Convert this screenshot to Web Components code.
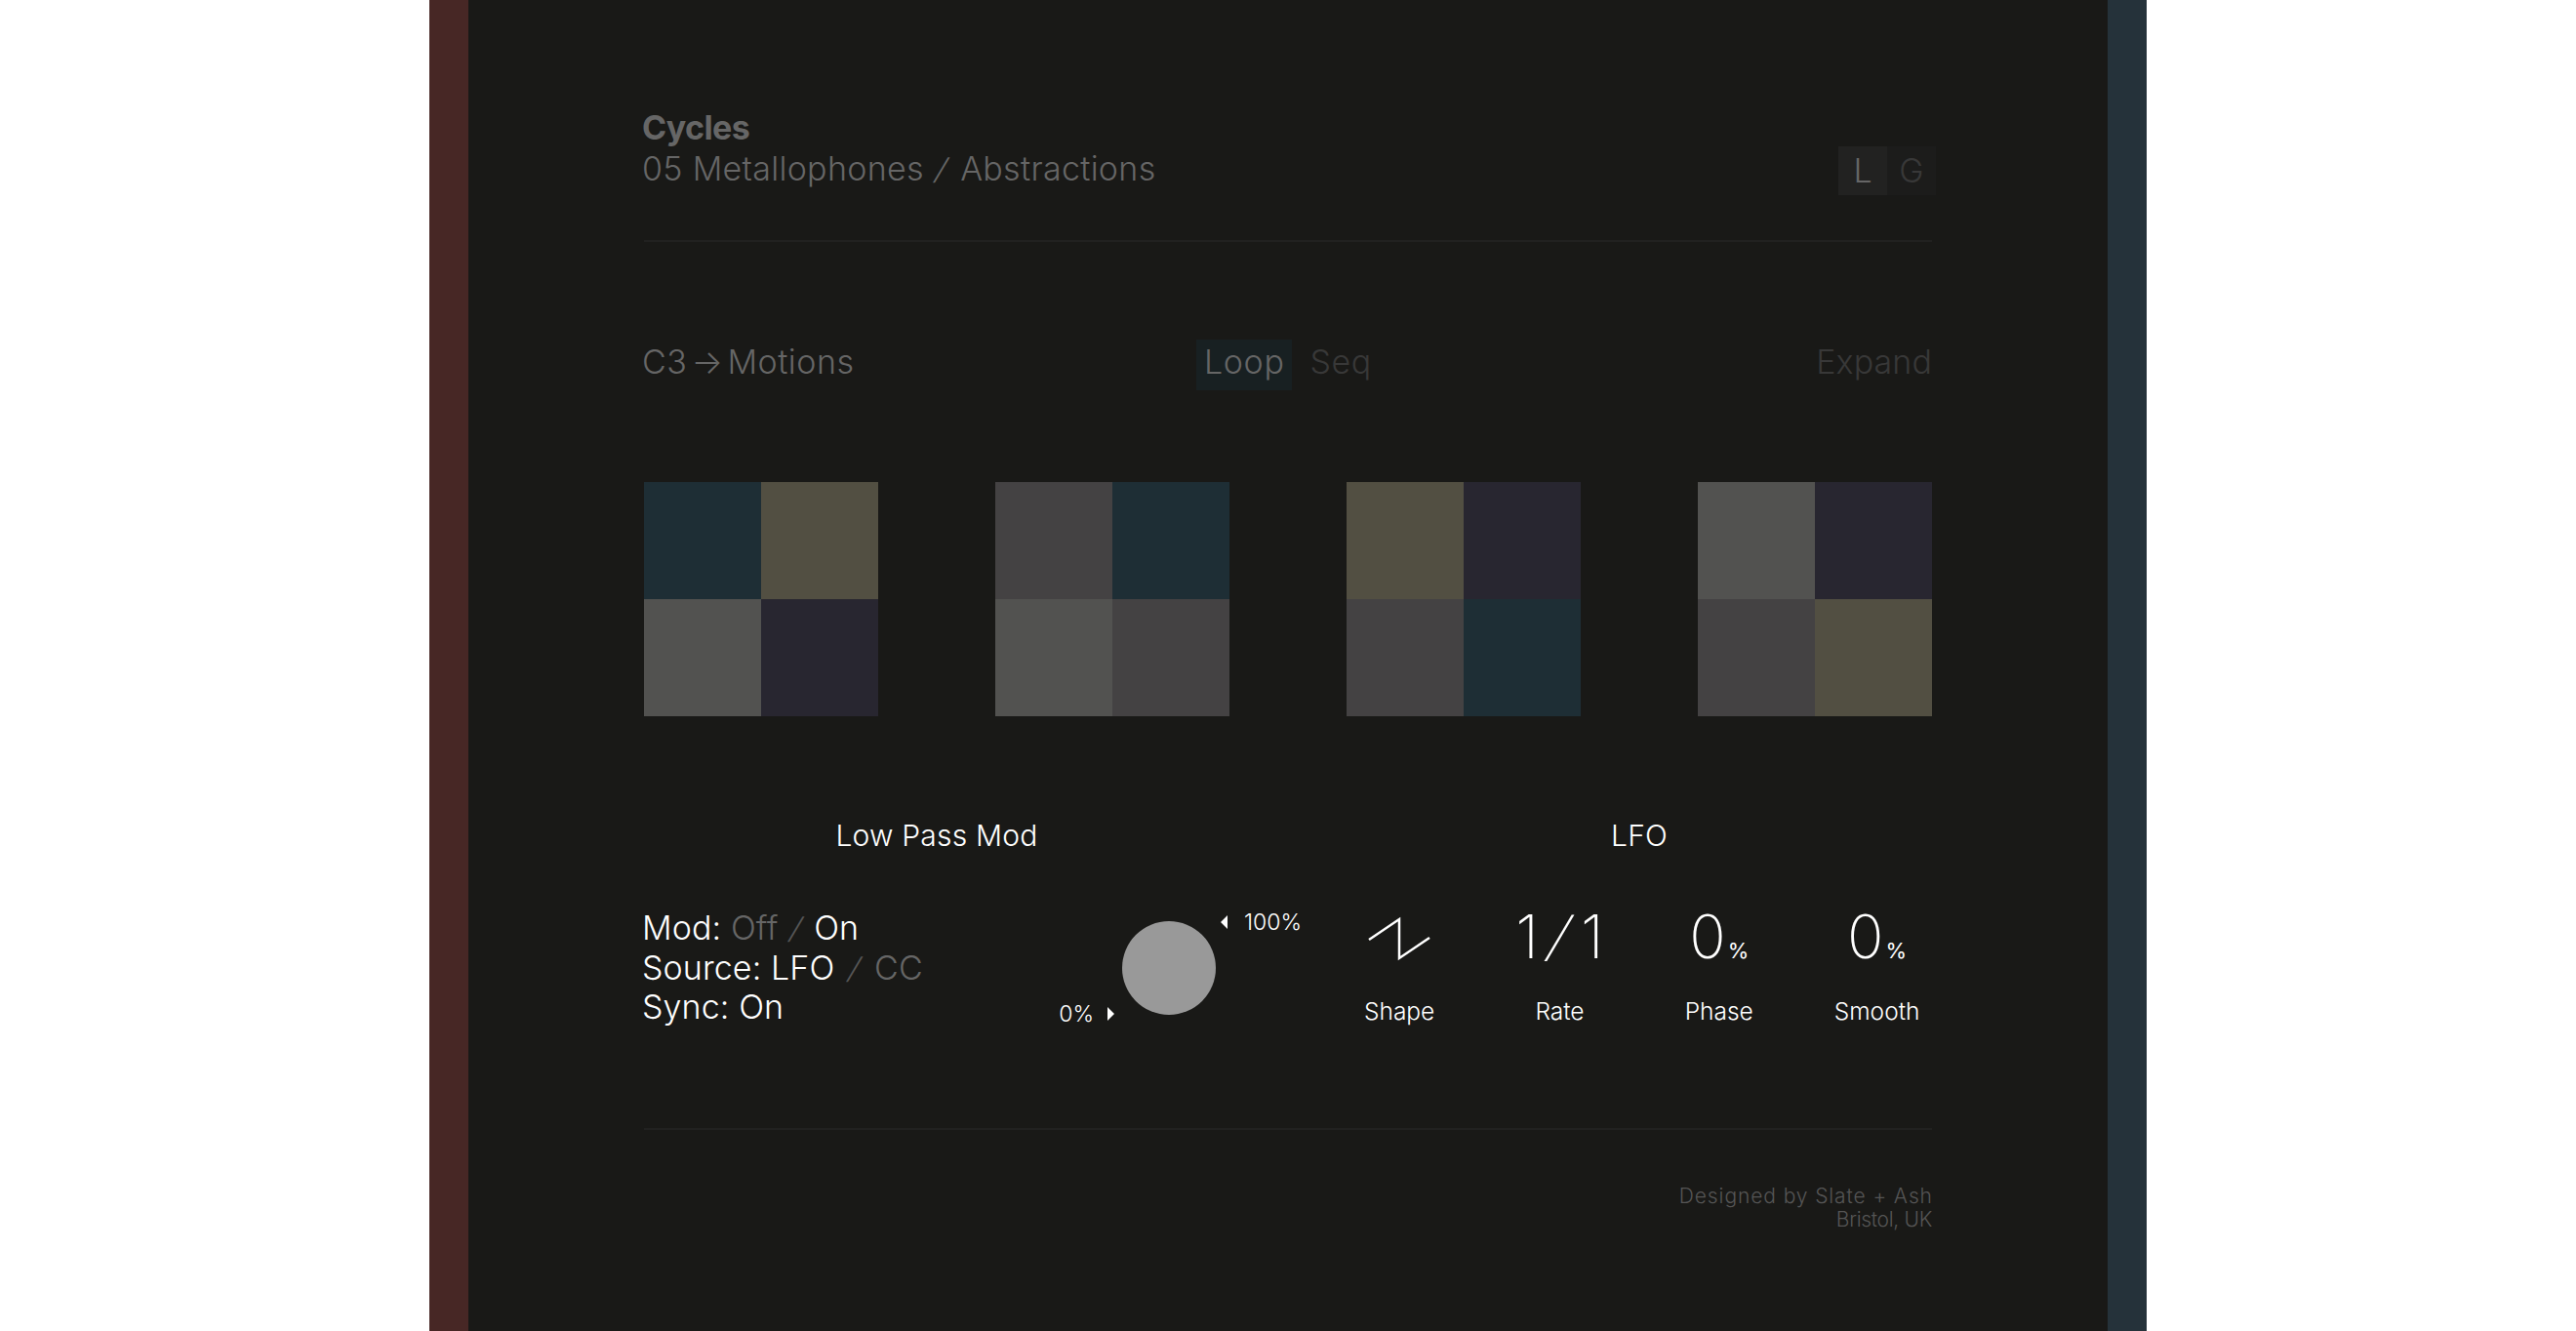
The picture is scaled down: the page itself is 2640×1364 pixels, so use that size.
<!DOCTYPE html>
<html lang="en">
<head>
<meta charset="utf-8">
<title>Cycles</title>
<style>
    html, body { margin: 0; padding: 0; background: #fff; }
    body { font-family: Inter, "Liberation Sans", sans-serif; font-weight: 300; overflow: hidden; }
</style>
</head>
<body>
<synth-page>
    <synth-header title="Cycles"></synth-header>
    <motion-bar></motion-bar>
    <swatch-row></swatch-row>
    <mod-panel></mod-panel>
    <site-footer></site-footer>
</synth-page>

<script>
    class SynthPage extends HTMLElement {
        constructor() {
            super();
            this.attachShadow({ mode: 'open' });
            this.shadowRoot.innerHTML = `
                <style>
                    :host { display: grid; grid-template-columns: 40px 1fr 40px; width: 1760px; height: 1364px; margin: 0 auto; overflow: hidden; }
                    .bar-left { background: #472725; }
                    .bar-right { background: #25323a; }
                    main { background: #191917; padding: 0 180px; min-width: 0; }
                </style>
                <div class="bar-left"></div>
                <main><slot></slot></main>
                <div class="bar-right"></div>
            `;
        }
    }

    // the reference slash is wider and leans more than the Inter one
    class SlashMark extends HTMLElement {
        constructor() {
            super();
            this.attachShadow({ mode: 'open' });
            this.shadowRoot.innerHTML = `
                <style>
                    :host { display: inline-block; transform: skewX(-16deg) scaleY(.88); margin: 0 var(--slash-gap, .08em); }
                </style>
                <slot></slot>
            `;
        }
    }

    class SynthHeader extends HTMLElement {
        constructor() {
            super();
            this.attachShadow({ mode: 'open' });
            this.shadowRoot.innerHTML = `
                <style>
                    :host { display: flex; justify-content: space-between; align-items: flex-end; height: 248px; box-sizing: border-box; padding-bottom: 46px; border-bottom: 2px solid #212120; font-size: 34px; line-height: 42px; font-weight: 350; color: #666; }
                    .text { margin: 0 0 6px -2px; letter-spacing: .3px; }
                    h1 { margin: 0; font: inherit; font-weight: 700; letter-spacing: -.6px; }
                    p { margin: 0; }
                    .toggle { display: flex; height: 50px; margin-right: -4px; }
                    .toggle span { width: 50px; display: flex; align-items: center; justify-content: center; background: #1c1c1b; color: #383838; }
                    .toggle span.on { background: #222221; color: #666; }
                </style>
                <div class="text">
                    <h1>${this.getAttribute('title')}</h1>
                    <p>05 Metallophones <slash-mark>/</slash-mark> Abstractions</p>
                </div>
                <div class="toggle"><span class="on">L</span><span>G</span></div>
            `;
        }
    }

    class MotionBar extends HTMLElement {
        constructor() {
            super();
            this.attachShadow({ mode: 'open' });
            this.shadowRoot.innerHTML = `
                <style>
                    :host { display: grid; grid-template-columns: 1fr auto 1fr; align-items: start; margin-top: 100px; font-size: 34px; line-height: 46px; font-weight: 350; color: #666; letter-spacing: .5px; }
                    .route { margin-left: -2px; word-spacing: -6px; }
                    .modes { display: flex; gap: 18px; margin-right: 8px; color: #383838; letter-spacing: .6px; }
                    .modes .on { background: #182022; color: #666; padding: 0 8px 6px; }
                    .expand { text-align: right; color: #383838; letter-spacing: .1px; }
                </style>
                <div class="route">C3 → Motions</div>
                <div class="modes"><span class="on">Loop</span><span>Seq</span></div>
                <div class="expand">Expand</div>
            `;
        }
    }

    const C = { teal: '#1e2e35', olive: '#524f42', grey: '#525250', plum: '#282630', mid: '#444243' };

    class MotionSwatch extends HTMLElement {
        constructor() {
            super();
            this.attachShadow({ mode: 'open' });
            const cells = this.getAttribute('cells').split(' ');
            this.shadowRoot.innerHTML = `
                <style>
                    :host { display: grid; grid-template-columns: 120px 120px; grid-auto-rows: 120px; }
                </style>
                ${cells.map(c => `<div style="background:${C[c]}"></div>`).join('')}
            `;
        }
    }

    class SwatchRow extends HTMLElement {
        constructor() {
            super();
            this.attachShadow({ mode: 'open' });
            this.shadowRoot.innerHTML = `
                <style>
                    :host { display: flex; justify-content: space-between; margin-top: 94px; }
                </style>
                <motion-swatch cells="teal olive grey plum"></motion-swatch>
                <motion-swatch cells="mid teal grey mid"></motion-swatch>
                <motion-swatch cells="olive plum mid teal"></motion-swatch>
                <motion-swatch cells="grey plum mid olive"></motion-swatch>
            `;
        }
    }

    class KnobDial extends HTMLElement {
        constructor() {
            super();
            this.attachShadow({ mode: 'open' });
            this.shadowRoot.innerHTML = `
                <style>
                    :host { display: block; position: relative; width: 96px; height: 96px; border-radius: 50%; background: #999; font-size: 23px; line-height: 30px; font-weight: 350; color: #fff; }
                    .tag { position: absolute; display: flex; align-items: center; white-space: nowrap; }
                    .max { left: 101px; top: -14px; gap: 17px; }
                    .min { right: 104px; top: 80px; gap: 14px; }
                    i { display: block; width: 0; height: 0; border-top: 7px solid transparent; border-bottom: 7px solid transparent; }
                    .max i { border-right: 7px solid #fff; }
                    .min i { border-left: 7px solid #fff; }
                </style>
                <div class="tag max"><i></i><span>100%</span></div>
                <div class="tag min"><span>0%</span><i></i></div>
            `;
        }
    }

    class LfoParam extends HTMLElement {
        constructor() {
            super();
            this.attachShadow({ mode: 'open' });
            this.shadowRoot.innerHTML = `
                <style>
                    :host { display: flex; flex-direction: column; align-items: center; color: #fff; --slash-gap: .18em; }
                    .value { display: flex; align-items: baseline; justify-content: center; height: 60px; font-size: 62px; line-height: 60px; font-weight: 200; white-space: nowrap; }
                    ::slotted(small) { font-size: 22px; font-weight: 400; margin-left: 2px; }
                    .label { margin-top: 30px; font-size: 24.5px; line-height: 32px; font-weight: 300; }
                </style>
                <div class="value"><slot></slot></div>
                <div class="label">${this.getAttribute('label')}</div>
            `;
        }
    }

    class ModPanel extends HTMLElement {
        constructor() {
            super();
            this.attachShadow({ mode: 'open' });
            this.shadowRoot.innerHTML = `
                <style>
                    :host { display: grid; grid-template-columns: 600px 600px; column-gap: 120px; margin-top: 104px; height: 320px; box-sizing: border-box; color: #fff; border-bottom: 2px solid #212120; }
                    h2 { margin: 0 0 57px; font: inherit; font-size: 30px; line-height: 36px; text-align: center; letter-spacing: .2px; }
                    .row { display: flex; justify-content: space-between; align-items: center; }
                    .list { margin-left: -2px; font-size: 34px; line-height: 40.5px; letter-spacing: .1px; --slash-gap: .08em; }
                    .wide { --slash-gap: .14em; }
                    .dim { color: #666; }
                    .sep { color: #555; }
                    knob-dial { margin-right: 14px; }
                    .params { display: flex; gap: 83px; margin-top: -1px; padding-left: 18px; }
                    svg { display: block; width: 64px; height: 60px; }
                </style>
                <section>
                    <h2>Low Pass Mod</h2>
                    <div class="row">
                        <div class="list">
                            <div>Mod: <span class="dim">Off</span> <slash-mark class="sep">/</slash-mark> On</div>
                            <div class="wide">Source: LFO <slash-mark class="sep">/</slash-mark> <span class="dim">CC</span></div>
                            <div>Sync: On</div>
                        </div>
                        <knob-dial></knob-dial>
                    </div>
                </section>
                <section>
                    <h2>LFO</h2>
                    <div class="params">
                        <lfo-param label="Shape">
                            <svg viewBox="0 0 64 60" fill="none" stroke="#fff" stroke-width="2.5"><path d="M1 33 L32 12 V52 L63 31"/></svg>
                        </lfo-param>
                        <lfo-param label="Rate">1<slash-mark>/</slash-mark>1</lfo-param>
                        <lfo-param label="Phase">0<small>%</small></lfo-param>
                        <lfo-param label="Smooth">0<small>%</small></lfo-param>
                    </div>
                </section>
            `;
        }
    }

    class SiteFooter extends HTMLElement {
        constructor() {
            super();
            this.attachShadow({ mode: 'open' });
            this.shadowRoot.innerHTML = `
                <style>
                    :host { display: block; margin-top: 56px; text-align: right; font-size: 21px; line-height: 24px; color: #555; font-weight: 350; }
                    .by { letter-spacing: .9px; margin-right: -.9px; }
                    .place { letter-spacing: -.3px; }
                </style>
                <div class="by">Designed by Slate + Ash</div>
                <div class="place">Bristol, UK</div>
            `;
        }
    }

    customElements.define('slash-mark', SlashMark);
    customElements.define('synth-page', SynthPage);
    customElements.define('synth-header', SynthHeader);
    customElements.define('motion-bar', MotionBar);
    customElements.define('motion-swatch', MotionSwatch);
    customElements.define('swatch-row', SwatchRow);
    customElements.define('knob-dial', KnobDial);
    customElements.define('lfo-param', LfoParam);
    customElements.define('mod-panel', ModPanel);
    customElements.define('site-footer', SiteFooter);
</script>
</body>
</html>
